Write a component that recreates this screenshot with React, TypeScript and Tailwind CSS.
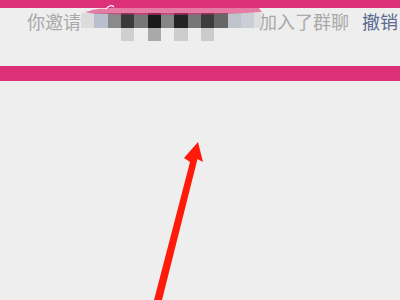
const mosaic = [
  { w: 13, top: '#dcdcdc', bottom: '' },
  { w: 14, top: '#b9bfcc', bottom: '' },
  { w: 13, top: '#8a8a8a', bottom: '' },
  { w: 13, top: '#3a3a3a', bottom: '#cfcfcf' },
  { w: 14, top: '#777777', bottom: '' },
  { w: 13, top: '#1a1a1a', bottom: '#a9a9a9' },
  { w: 13, top: '#868686', bottom: '' },
  { w: 14, top: '#232323', bottom: '#cdcdcd' },
  { w: 13, top: '#777777', bottom: '' },
  { w: 13, top: '#3c3c3c', bottom: '#cbcbcb' },
  { w: 14, top: '#676767', bottom: '' },
  { w: 13, top: '#c0c4cc', bottom: '' },
  { w: 13, top: '#cbced6', bottom: '' },
  { w: 7, top: '#dedede', bottom: '' },
]

function Mosaic() {
  return (
    <div className="relative flex mt-[5px]">
      {mosaic.map((c, i) => (
        <div key={i} className="flex flex-col">
          <div className="h-[15px]" style={{ width: c.w, background: c.top }} />
          <div className="h-[13px]" style={{ width: c.w, background: c.bottom || 'transparent' }} />
        </div>
      ))}
    </div>
  )
}

export default function App() {
  return (
    <div className="relative w-[400px] h-[300px] overflow-hidden bg-[#eeeeee] flex flex-col" style={{ fontFamily: '"Noto Sans CJK SC", "Noto Sans", sans-serif' }}>
      <div className="h-[8px] bg-[#dd3177]" />
      <div className="h-[58px] flex items-start pl-[27px]">
        <span className="text-[18px] leading-none text-[#a9a9a9] mt-[4px]">你邀请</span>
        <Mosaic />
        <span className="text-[18px] leading-none text-[#a9a9a9] mt-[4px] ml-[-2px]">加入了群聊</span>
        <span className="text-[18px] leading-none text-[#5a6a90] mt-[4px] ml-[13px] whitespace-nowrap">撤销</span>
      </div>
      <div className="h-[15px] bg-[#dd3177]" />
      <div className="flex-1" />

      <svg className="absolute left-0 top-0" width="400" height="300" viewBox="0 0 400 300">
        <path d="M85 12 C95 9 100 8 106 9 C109 6 112 6 114 7 C150 6 220 5 258 7 L262 12 C220 15 150 16 110 14 C100 14 92 14 85 12 Z" fill="#dd3177" opacity="0.6" />
        <path d="M106 9 C109 5 112 5 114 7" stroke="#ffffff" strokeWidth="1.2" fill="none" />
        <polygon points="198,142 203,162 197.5,159 162,300 154,300 190,162 184,158" fill="#ff1a0a" />
      </svg>
    </div>
  )
}
